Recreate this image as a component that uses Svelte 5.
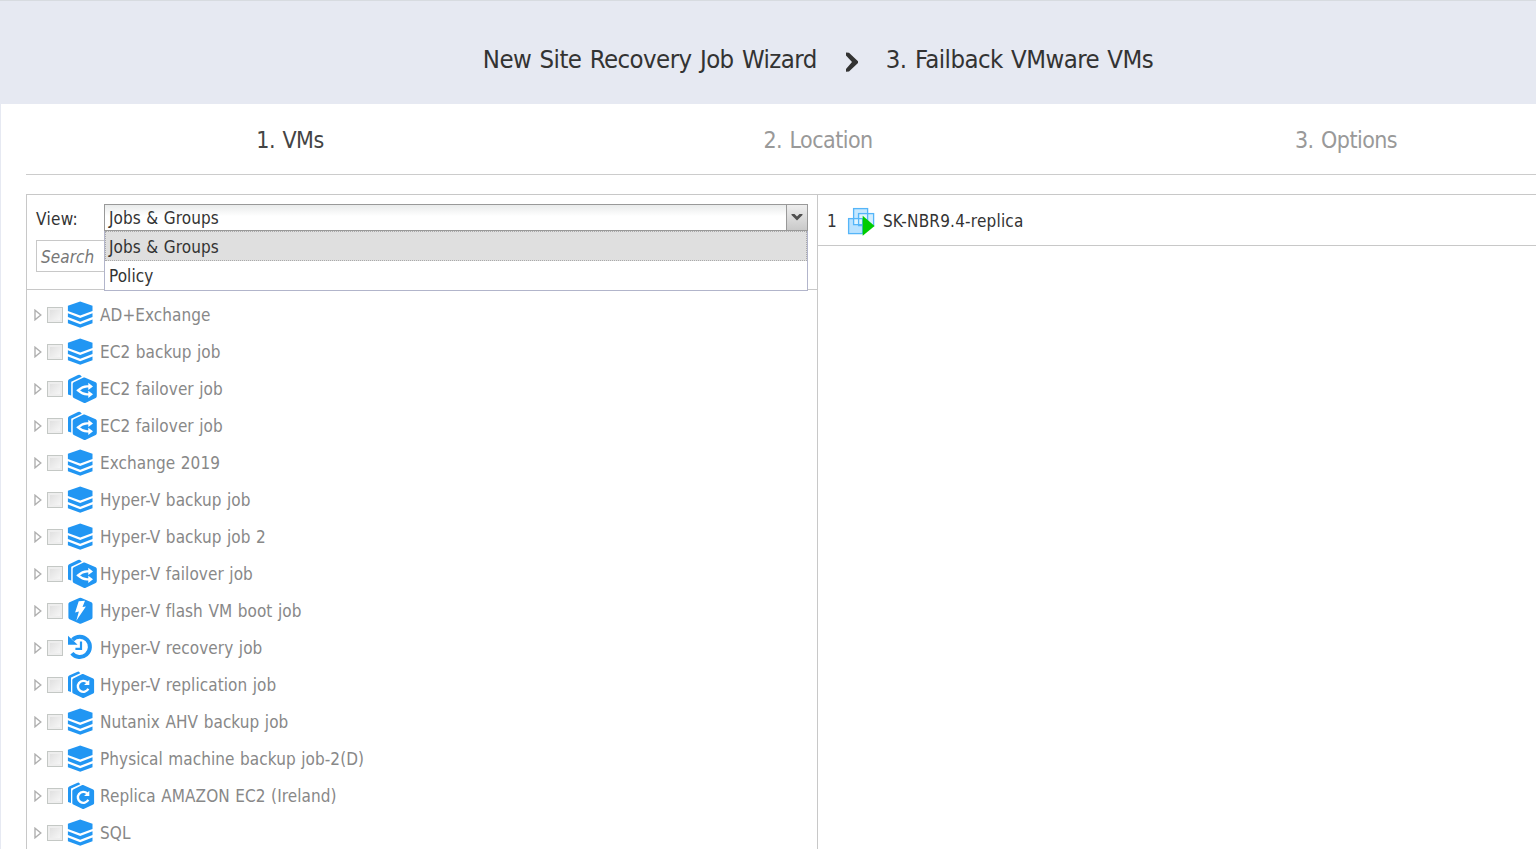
<script>
  const views = ['Jobs & Groups', 'Policy'];
  const steps = ['1. VMs', '2. Location', '3. Options'];
  const jobs = [
    ['backup', 'AD+Exchange'],
    ['backup', 'EC2 backup job'],
    ['failover', 'EC2 failover job'],
    ['failover', 'EC2 failover job'],
    ['backup', 'Exchange 2019'],
    ['backup', 'Hyper-V backup job'],
    ['backup', 'Hyper-V backup job 2'],
    ['failover', 'Hyper-V failover job'],
    ['flash', 'Hyper-V flash VM boot job'],
    ['recovery', 'Hyper-V recovery job'],
    ['replica', 'Hyper-V replication job'],
    ['backup', 'Nutanix AHV backup job'],
    ['backup', 'Physical machine backup job-2(D)'],
    ['replica', 'Replica AMAZON EC2 (Ireland)'],
    ['backup', 'SQL']
  ];
</script>

<div class="viewport">
  <div class="page">
    <header>
      <span>New Site Recovery Job Wizard</span>
      <svg class="sep" width="14" height="20" viewBox="0 0 14 20"><path d="M1 0.5 L4 .8 L13 9.2 V11 L4 19.5 L1 19.8 V17 L7 10 L1 3.5Z" fill="#333" /></svg>
      <span>3. Failback VMware VMs</span>
    </header>
    <main>
      <nav>
        {#each steps as s, i}<div class:active={i === 0}>{s}</div>{/each}
      </nav>
      <div class="panels">
        <section class="left">
          <div class="filters">
            <div class="row">
              <label for="view">View:</label>
              <div class="combo" id="view">
                <div class="value">{views[0]}</div>
                <div class="trigger"><svg width="12" height="7" viewBox="0 0 12 7"><path d="M.5 0H3.5L6 2.6L8.5 0H11.5V1L6 6.4L.5 1Z" fill="#505050" /></svg></div>
                <div class="list">
                  {#each views as v, i}<div class="option" class:selected={i === 0}>{v}</div>{/each}
                </div>
              </div>
            </div>
            <div class="search">Search</div>
          </div>
          <div class="tree">
            {#each jobs as [type, name]}
              <div class="job">
                <svg class="arrow" width="8" height="12" viewBox="0 0 8 12"><path d="M1 1.2V10.8L6.8 6Z" fill="#fff" stroke="#b0b0b0" stroke-width="1.4" /></svg>
                <span class="check"></span>
                <svg class="icon" width="32" height="30" viewBox="0 0 32 30">
                  {#if type === 'backup'}
                    <g fill="#2196f3"><path d="M13.2 1.4 25.5 5.8V11L13.2 15.5.9 11V5.8Z" /><path d="M.9 13.2 13.2 18 25.5 13.2V17.1L13.2 21.8 .9 17.1Z" /><path d="M.9 19.4 13.2 24.2 25.5 19.4V23.2L13.2 27.8 .9 23.2Z" /></g>
                  {:else if type === 'failover'}
                    <path d="M13.5 1.2 14.8 2.8 4.2 7.8V21.5L1 20.4V7.2Q1 5.8 2.2 5.2L11 1.1Q12.5.6 13.5 1.2Z" fill="#2196f3" />
                    <path d="M17.7 3.6 28.7 8.3Q29.8 8.8 29.8 10V22Q29.8 23.4 28.7 23.9L18.8 28.7Q17.7 29.2 16.6 28.7L6.8 24Q5.7 23.4 5.7 22V10Q5.7 8.8 6.8 8.3L16.6 3.6Q17.1 3.3 17.7 3.6Z" fill="#2196f3" />
                    <path d="M22.5 12.4H20Q15.5 12.5 11 16.3Q15.5 20.2 20 20.3H22.5" fill="none" stroke="#fff" stroke-width="2.3" />
                    <path d="M21.3 8.8 26 12.4 21.3 16ZM21.3 16.7 26 20.3 21.3 23.9Z" fill="#fff" />
                  {:else if type === 'flash'}
                    <path d="M12.2 2Q13.3 1.5 14.4 2L24.4 6.2Q25.5 6.7 25.5 7.9V21.5Q25.5 22.7 24.4 23.2L14.4 27.4Q13.3 27.9 12.2 27.4L2.5 23.2Q1.4 22.7 1.4 21.5V7.9Q1.4 6.7 2.5 6.2Z" fill="#2196f3" />
                    <path d="M11.7 5.2 18 4.7 15.5 10.9 18.9 10.5 9.3 24.7 11.9 15.6 8.1 16.5Z" fill="#fff" />
                  {:else if type === 'recovery'}
                    <path d="M5.6 6.8A10.1 10.1 0 1 1 4.9 20.2" fill="none" stroke="#2196f3" stroke-width="4" />
                    <path d="M1 2.8V11.8H10.6Z" fill="#2196f3" />
                    <path d="M14 8.4V15.8H8.4" fill="none" stroke="#2196f3" stroke-width="2.2" />
                  {:else}
                    <path d="M12 1.7 13.3 3.2 4 7.6V22L1 20.9V7.4Q1 6.1 2.2 5.5L10 1.9Q11.3 1.3 12 1.7Z" fill="#2196f3" />
                    <path d="M16.2 4.1 26.2 8.6Q27.1 9.1 27.1 10.1V22Q27.1 23.1 26.2 23.6L17.2 27.8Q16.2 28.2 15.2 27.8L6.3 23.6Q5.3 23.1 5.3 22V10.1Q5.3 9.1 6.3 8.6L15.2 4.1Q15.7 3.8 16.2 4.1Z" fill="#2196f3" />
                    <path d="M20.2 12.4A5.5 5.5 0 1 0 21.3 18.8" fill="none" stroke="#fff" stroke-width="2.4" /><path d="M22.3 9.7V14.9H17.1Z" fill="#fff" />
                  {/if}
                </svg>
                <span class="name">{name}</span>
              </div>
            {/each}
          </div>
        </section>
        <section class="right">
          <div class="vm">
            <span class="num">1</span>
            <svg width="28" height="29" viewBox="0 0 28 29">
              <g stroke="#55b5f8" stroke-width="1.3"><rect x="6.6" y="1.6" width="14" height="16" fill="#c6e8ff" /><rect x="11.6" y="6.6" width="15" height="12" fill="#d3eeff" /><rect x="1.6" y="11.6" width="14" height="15" fill="#b9e2ff" /><path d="M6.6 11.6V17.6H20.6V6.6H11.6V18.6H15.6V11.6Z" fill="#e0f4ff" /></g>
              <path d="M15.7 8.8V28.8L27.6 18.9Z" fill="#0c0" />
            </svg>
            <span>SK-NBR9.4-replica</span>
          </div>
        </section>
      </div>
    </main>
  </div>
</div>

<style>
  :global(body) { margin: 0; overflow: hidden; }
  .viewport { width: 1536px; height: 849px; overflow: hidden; background: #fff; }
  .page { width: 1636px; height: 849px; font: 17px/24px "DejaVu Sans Condensed", "DejaVu Sans", Tahoma, sans-serif; font-stretch: condensed; color: #333; letter-spacing: 0.07px; word-spacing: 0.6px; white-space: nowrap; box-sizing: border-box; }
  header { height: 104px; box-sizing: border-box; border-top: 1px solid #d7dbe0; background: #e6e9f2; display: flex; justify-content: center; align-items: center; padding-top: 13px; font-size: 25.5px; letter-spacing: -0.55px; word-spacing: 1.6px; }
  .sep { margin: 5px 27px 0 28px; }
  main { height: 745px; box-sizing: border-box; border-left: 1px solid #e6e9f2; padding: 0 26px 0 25px; }
  nav { height: 71px; box-sizing: border-box; border-bottom: 1px solid #ccc; display: grid; grid-template-columns: repeat(3, 1fr); text-align: center; font-size: 23px; line-height: 72px; letter-spacing: -0.55px; word-spacing: 1.5px; color: #999; }
  nav .active { color: #444; }
  .panels { margin-top: 19px; display: flex; height: 655px; border: 1px solid #c8c8c8; border-bottom: 0; box-sizing: border-box; }
  .left { width: 790px; border-right: 1px solid #c8c8c8; flex: none; }
  .right { flex: 1; }
  .filters { height: 95px; box-sizing: border-box; border-bottom: 1px solid #c8c8c8; padding: 9px 9px 0; }
  .row { display: flex; height: 27px; }
  label { width: 68px; line-height: 31px; letter-spacing: 0.3px; }
  .combo { position: relative; display: flex; width: 704px; height: 27px; box-sizing: border-box; border: 1px solid #999; background: linear-gradient(#e9ebeb, #fff 45%); }
  .value { flex: 1; padding-left: 4px; line-height: 27px; }
  .trigger { width: 20px; border-left: 1px solid #999; background: linear-gradient(#eee, #c9c9c9); display: flex; align-items: center; justify-content: center; }
  .trigger svg { margin-right: 1px; }
  .list { position: absolute; z-index: 2; left: -1px; top: 26px; width: 704px; height: 60px; box-sizing: border-box; border: 1px solid #b2b5cb; border-top: 0; background: #fff; }
  .option { height: 29px; box-sizing: border-box; padding-left: 4px; line-height: 31px; }
  .selected { border: 1px dotted #aaa; background: #dfdfdf; padding-left: 3px; line-height: 30px; height: 30px; }
  .search { margin-top: 9px; width: 160px; height: 32px; box-sizing: border-box; border: 1px solid #c8c8c8; padding-left: 4px; line-height: 33px; font-style: italic; color: #777; }
  .tree { padding: 6px 0 0 7px; }
  .job { display: flex; align-items: center; height: 37px; color: #888; }
  .check { width: 16px; height: 16px; margin-left: 5px; box-sizing: border-box; border: 1px solid #c4c8c5; background: linear-gradient(135deg, #dcdcdc, #fafafa); box-shadow: inset 0 0 0 2px #eee; }
  .icon { margin-left: 4px; }
  .name { margin-left: 1px; }
  .vm { display: flex; align-items: center; height: 50px; border-bottom: 1px solid #c8c8c8; padding-left: 9px; letter-spacing: 0.2px; }
  .vm span { padding-top: 2px; }
  .vm svg { margin: 2px 8px 0 10px; }
</style>
